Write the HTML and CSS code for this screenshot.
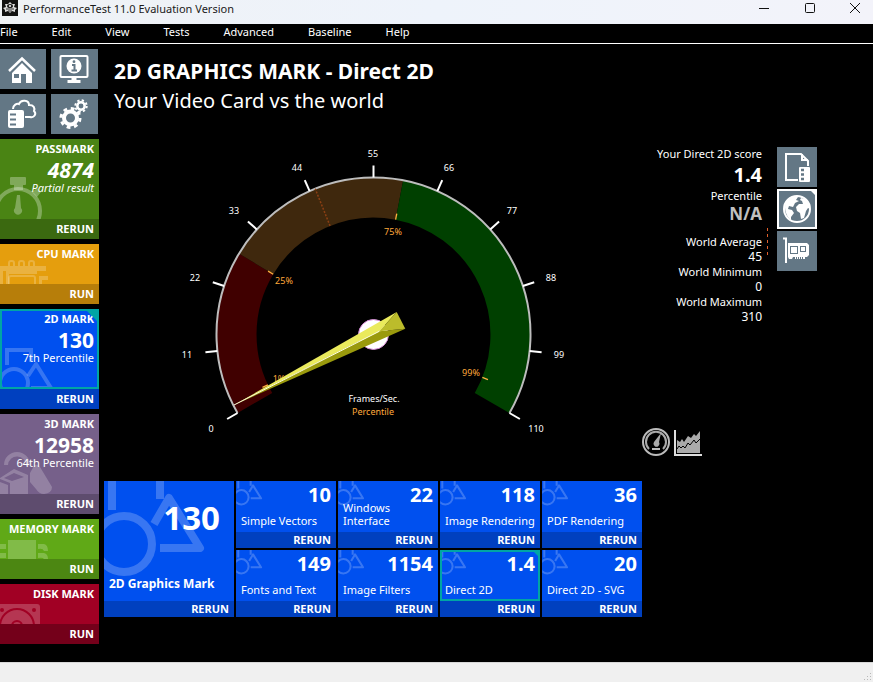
FILE: index.html
```html
<!DOCTYPE html>
<html lang="en">
<head>
<meta charset="utf-8">
<title>PerformanceTest 11.0 Evaluation Version</title>
<link rel="stylesheet" href="styles.css">
</head>
<body>
<svg class="defs" aria-hidden="true">
  <symbol id="shapes" viewBox="0 0 130 120">
    <g fill="none" stroke="currentColor" stroke-width="8" stroke-linejoin="round">
      <path d="M8 0V29M56 0V18"/>
      <circle cx="20" cy="63" r="28"/>
      <path d="M50 43L65 17L96 67H56"/>
    </g>
  </symbol>
</svg>

<header class="titlebar">
  <svg class="app-icon" viewBox="0 0 16 16" aria-hidden="true">
    <rect width="16" height="16" fill="#111"/>
    <path d="M1 8L4 7L3 4L6 4L8 2L10 4L13 4L12 7L15 8L13 10L13 12L10 11L8 13L6 11L3 12L3 10Z" fill="#ddd"/>
    <ellipse cx="8" cy="6" rx="3" ry="2" fill="#222"/><path d="M4 9H12M6 11H10" stroke="#333"/><circle cx="8" cy="6" r="1" fill="#fff"/>
  </svg>
  <span class="app-name">PerformanceTest 11.0 Evaluation Version</span>
  <div class="window-buttons">
    <button aria-label="Minimize"><svg viewBox="0 0 12 12"><path d="M1 6.500H11"/></svg></button>
    <button aria-label="Maximize"><svg viewBox="0 0 12 12"><rect x="1.500" y="1.500" width="9" height="9" rx="1"/></svg></button>
    <button aria-label="Close"><svg viewBox="0 0 12 12"><path d="M1 1L11 11M11 1L1 11"/></svg></button>
  </div>
</header>

<nav class="menubar">
  <a href="#file">File</a><a href="#edit">Edit</a><a href="#view">View</a><a href="#tests">Tests</a><a href="#advanced">Advanced</a><a href="#baseline">Baseline</a><a href="#help">Help</a>
</nav>

<div class="workspace">
  <aside class="sidebar">
    <div class="shortcuts">
      <button class="icon-button" aria-label="Home">
        <svg viewBox="0 0 46 40"><path d="M9 22L22 9.500L35 22" fill="none" stroke="#fff" stroke-width="2.500"/><path d="M12 24L22 14L32 24V34H26V25H21V34H12Z" fill="#fff"/><rect x="14" y="25" width="5" height="4" fill="#637785"/></svg>
      </button>
      <button class="icon-button" aria-label="System information">
        <svg viewBox="0 0 46 40"><rect x="9" y="7" width="27" height="21" rx="1" fill="none" stroke="#fff" stroke-width="2"/><circle cx="22.500" cy="17" r="7.500" fill="#fff"/><circle cx="22.500" cy="12.700" r="1.400" fill="#637785"/><path d="M20.500 16H23V21M20 21.500H25.500" stroke="#637785" stroke-width="2" fill="none"/><path d="M20 29H25V31H29V34H16V31H20Z" fill="#fff"/></svg>
      </button>
      <button class="icon-button" aria-label="Baselines">
        <svg viewBox="0 0 46 40"><path d="M13 15C13 11 17 9 19 10C21 5 29 6 29 11C34 11 35 14 34 17C37 20 34 24 30 23H25" fill="none" stroke="#fff" stroke-width="2"/><rect x="8" y="16" width="16" height="18" rx="2" fill="#fff"/><path d="M10 20.500H16M10 25.500H16M10 30.500H16" stroke="#637785" stroke-width="2"/></svg>
      </button>
      <button class="icon-button" aria-label="Preferences">
        <svg viewBox="0 0 46 40"><g fill="none" stroke="#fff"><circle cx="19" cy="24" r="6.500" stroke-width="4"/><circle cx="19" cy="24" r="9.500" stroke-width="3" stroke-dasharray="3.730 3.730"/><circle cx="29.500" cy="12" r="3.700" stroke-width="2.500"/><circle cx="29.500" cy="12" r="5.700" stroke-width="2" stroke-dasharray="2.240 2.240"/></g></svg>
      </button>
    </div>

    <section class="mark mark-tall passmark">
      <div class="mark-body">
        <svg class="mark-art" viewBox="0 0 60 50"><rect x="10" y="8" width="16" height="8" rx="1" fill="currentColor"/><path d="M14 16H23V21H14ZM32 23L37 19L41 23L37 28Z" fill="currentColor"/><circle cx="18" cy="42" r="22" fill="none" stroke="currentColor" stroke-width="4"/><path d="M17 26H20L21 39A4 4 0 1 1 15 39Z" fill="currentColor"/></svg>
        <h2>PASSMARK</h2><strong class="partial">4874</strong><em>Partial result</em>
      </div>
      <button class="run">RERUN</button>
    </section>
    <section class="mark cpu">
      <div class="mark-body">
        <svg class="mark-art" viewBox="0 0 60 50"><path d="M0 32H46V37H0ZM0 37H3V50H0ZM6 37H37V40H9V50H6ZM39 42H48V46H42V50H39Z" fill="currentColor"/><path d="M9 32V29Q9 27 11 27H12Q14 27 14 29V32M19 32V29Q19 27 21 27H22Q24 27 24 29V32M29 32V29Q29 27 31 27H32Q34 27 34 29V32" fill="none" stroke="currentColor" stroke-width="2"/><path d="M9 50V44Q9 42 11 42H33Q35 42 35 44V50" fill="none" stroke="currentColor" stroke-width="2"/></svg>
        <h2>CPU MARK</h2>
      </div>
      <button class="run">RUN</button>
    </section>
    <section class="mark mark-tall twod">
      <div class="mark-body selected">
        <svg class="mark-art" viewBox="0 0 60 50"><g fill="none" stroke="currentColor" stroke-width="4"><path d="M7 26V11H31V23"/><circle cx="14" cy="44" r="14"/><path d="M28 37L36 25L51 49H31" stroke-linejoin="round"/></g></svg>
        <h2>2D MARK</h2><strong>130</strong><span>7th Percentile</span>
      </div>
      <button class="run">RERUN</button>
    </section>
    <section class="mark mark-tall threed">
      <div class="mark-body">
        <svg class="mark-art" viewBox="0 0 60 50"><path d="M4 21A13 13 0 0 1 30 21L26 22A9 9 0 0 0 8 21Z" fill="currentColor"/><path d="M0 34L14 25L28 31V50H10V39L0 35ZM4 34L12 37L24 33L14 29Z" fill="currentColor" fill-rule="evenodd"/><path d="M0 38L8 41V50H0ZM34 22Q37 19 40 23L52 43Q52 49 44 50Q39 50 36 45L30 38V29Z" fill="currentColor"/></svg>
        <h2>3D MARK</h2><strong>12958</strong><span>64th Percentile</span>
      </div>
      <button class="run">RERUN</button>
    </section>
    <section class="mark memory">
      <div class="mark-body">
        <svg class="mark-art" viewBox="0 0 60 50"><path d="M8 31H36V50H8ZM0 35H6V40H0ZM0 44H6V49H0ZM38 35H44Q48 36 48 42H44Q43 39 38 40ZM38 44H44Q48 45 48 50H44Q43 48 38 49Z" fill="currentColor"/></svg>
        <h2>MEMORY MARK</h2>
      </div>
      <button class="run">RUN</button>
    </section>
    <section class="mark disk">
      <div class="mark-body">
        <svg class="mark-art" viewBox="0 0 60 50"><path d="M0 30H37Q40 30 40 33V50H0Z" fill="currentColor"/><g fill="none" stroke="#a10024" stroke-width="2"><circle cx="17" cy="52" r="17"/><circle cx="17" cy="52" r="5"/></g><circle cx="2" cy="36" r="2" fill="#a10024"/><circle cx="34" cy="36" r="2" fill="#a10024"/></svg>
        <h2>DISK MARK</h2>
      </div>
      <button class="run">RUN</button>
    </section>
  </aside>

  <main>
    <h1>2D GRAPHICS MARK - Direct 2D</h1>
    <p class="subtitle">Your Video Card vs the world</p>

    <div class="stage">
      <svg class="gauge" viewBox="104 127 538 333" role="img" aria-label="Direct 2D score gauge">
        <g transform="translate(373.500 334.500)" fill="none">
          <path d="M-118.600 68.500A137 137 0 0 1 -117.400 -70.600" stroke="#400000" stroke-width="40"/>
          <path d="M-117.400 -70.600A137 137 0 0 1 25.900 -134.500" stroke="#3f280d" stroke-width="40"/>
          <path d="M25.900 -134.500A137 137 0 0 1 118.600 68.500" stroke="#004000" stroke-width="40"/>
          <path d="M-136 78.500A157 157 0 1 1 136 78.500" stroke="#bdbdbd" stroke-width="2"/>
          <path d="M0 -117V-157" transform="rotate(-21.800)" stroke="#8b3f13" stroke-width="1.500" stroke-dasharray="2 1.500"/>
          <g stroke="#fff" stroke-width="2">
            <path d="M0 -157V-169" transform="rotate(-120)"/><path d="M0 -157V-169" transform="rotate(-96)"/><path d="M0 -157V-169" transform="rotate(-72)"/><path d="M0 -157V-169" transform="rotate(-48)"/><path d="M0 -157V-169" transform="rotate(-24)"/><path d="M0 -157V-169"/><path d="M0 -157V-169" transform="rotate(24)"/><path d="M0 -157V-169" transform="rotate(48)"/><path d="M0 -157V-169" transform="rotate(72)"/><path d="M0 -157V-169" transform="rotate(96)"/><path d="M0 -157V-169" transform="rotate(120)"/>
          </g>
          <g stroke="#ffb040" stroke-width="1.300">
            <path d="M0 -117V-123" transform="rotate(-115.500)"/><path d="M0 -117V-123" transform="rotate(-59)"/><path d="M0 -117V-123" transform="rotate(10.900)"/><path d="M0 -117V-123" transform="rotate(111.500)"/>
          </g>
        </g>
        <g class="gauge-scale">
          <text x="211" y="432">0</text><text x="187" y="358">11</text><text x="195" y="281">22</text><text x="234" y="214">33</text><text x="297" y="171">44</text><text x="373" y="157">55</text><text x="449" y="171">66</text><text x="512" y="214">77</text><text x="551" y="281">88</text><text x="559" y="358">99</text><text x="536" y="432">110</text>
          <text x="374" y="402">Frames/Sec.</text>
        </g>
        <g class="gauge-percent">
          <text x="279" y="382">1%</text><text x="284" y="284">25%</text><text x="393" y="235">75%</text><text x="471" y="376">99%</text><text x="373" y="415">Percentile</text>
        </g>
        <circle cx="373.500" cy="334.500" r="15" fill="#fff" stroke="#d58bd5"/>
        <path d="M234 405L396.700 312L379.300 331.300Z" fill="#eaea5c"/>
        <path d="M234 405L379.300 331.300L405.300 328.700Z" fill="#9a9a0d"/>
        <path d="M396.700 312L405.300 328.700L379.300 331.300Z" fill="#bcbc2b"/>
        <path d="M234 405L379.300 331.300" stroke="#ffffe0"/>
      </svg>

      <div class="results">
        <div class="score-row">
          <dl class="scores">
            <dt>Your Direct 2D score</dt><dd class="score">1.4</dd>
            <dt>Percentile</dt><dd class="score muted">N/A</dd>
            <div class="world">
              <dt>World Average</dt><dd>45</dd>
              <dt>World Minimum</dt><dd>0</dd>
              <dt>World Maximum</dt><dd>310</dd>
            </div>
          </dl>
          <div class="compare">
            <button class="icon-button" aria-label="Compare with baselines">
              <svg viewBox="0 0 40 40"><path d="M21 33H9V7H24L31 14V19" fill="none" stroke="#fff" stroke-width="2"/><path d="M25 7V13H31" fill="none" stroke="#fff" stroke-width="2"/><rect x="22" y="20" width="11" height="15" rx="1" fill="#fff"/><path d="M24 23H27M24 27.500H27M24 32H27" stroke="#637785" stroke-width="2.500"/></svg>
            </button>
            <button class="icon-button current" aria-label="Compare with the world">
              <svg viewBox="0 0 40 40"><circle cx="20" cy="20" r="13" fill="none" stroke="#fff" stroke-width="2"/><path d="M8 18C8 12 12 8 17 7L21 8L19 11L22 12L18 14L16 18L12 17L11 20L15 21L17 24L14 28V31C10 28 8 23 8 18ZM24 9L28 10C31 13 33 16 33 20L31 19L29 22L27 29L24 30L23 24L20 22L19 18L22 15L26 15L25 12L23 11Z" fill="#fff"/><path d="M34 2H38V6Z" fill="#fff"/></svg>
            </button>
            <button class="icon-button" aria-label="Compare with graphics cards">
              <svg viewBox="0 0 40 40"><path d="M6 7.500H9V32" fill="none" stroke="#fff" stroke-width="2"/><path d="M11 12H30L32 14V24L30 26H28V28H18V26H16L15 28H12L11 26Z" fill="#fff"/><g fill="none" stroke="#637785"><rect x="13.500" y="15.500" width="7" height="7"/><rect x="23.500" y="15.500" width="5" height="5"/><path d="M19.500 26V28M21.500 26V28M23.500 26V28M25.500 26V28"/></g></svg>
            </button>
          </div>
        </div>
        <div class="chart-kinds">
          <button aria-label="Gauge"><svg viewBox="0 0 28 28"><circle cx="14" cy="14" r="13" fill="none" stroke="#bbb" stroke-width="2"/><path d="M7 21A10 10 0 1 1 21 21" fill="none" stroke="#aaa" stroke-width="2"/><path d="M19 5L17 14A3 3 0 1 1 12 14Z" fill="#aaa"/><path d="M10 21H18" stroke="#bbb" stroke-width="2"/></svg></button>
          <button aria-label="Distribution"><svg viewBox="0 0 28 28"><path d="M1 2V27H28" fill="none" stroke="#ddd" stroke-width="2"/><path d="M3 12L6 14L8 11L10 14L14 8L17 10L20 6L22 8L26 3V25H3Z" fill="#aaa"/><path d="M3 21L5 18L7 20L9 18L11 20L14 15L16 17L20 12L22 15L26 11" fill="none" stroke="#000"/></svg></button>
        </div>
      </div>
    </div>

    <div class="tests">
      <section class="overall">
        <div class="test-body"><svg class="art" viewBox="0 0 130 120"><use href="#shapes"/></svg><strong>130</strong><h2>2D Graphics Mark</h2></div>
        <button class="run">RERUN</button>
      </section>
      <section class="test"><div class="test-body"><svg class="art" viewBox="0 0 130 120"><use href="#shapes"/></svg><strong>10</strong><h3>Simple Vectors</h3></div><button class="run">RERUN</button></section>
      <section class="test"><div class="test-body"><svg class="art" viewBox="0 0 130 120"><use href="#shapes"/></svg><strong>22</strong><h3>Windows<br>Interface</h3></div><button class="run">RERUN</button></section>
      <section class="test"><div class="test-body"><svg class="art" viewBox="0 0 130 120"><use href="#shapes"/></svg><strong>118</strong><h3>Image Rendering</h3></div><button class="run">RERUN</button></section>
      <section class="test"><div class="test-body"><svg class="art" viewBox="0 0 130 120"><use href="#shapes"/></svg><strong>36</strong><h3>PDF Rendering</h3></div><button class="run">RERUN</button></section>
      <section class="test"><div class="test-body"><svg class="art" viewBox="0 0 130 120"><use href="#shapes"/></svg><strong>149</strong><h3>Fonts and Text</h3></div><button class="run">RERUN</button></section>
      <section class="test"><div class="test-body"><svg class="art" viewBox="0 0 130 120"><use href="#shapes"/></svg><strong>1154</strong><h3>Image Filters</h3></div><button class="run">RERUN</button></section>
      <section class="test"><div class="test-body selected"><svg class="art" viewBox="0 0 130 120"><use href="#shapes"/></svg><strong>1.4</strong><h3>Direct 2D</h3></div><button class="run">RERUN</button></section>
      <section class="test"><div class="test-body"><svg class="art" viewBox="0 0 130 120"><use href="#shapes"/></svg><strong>20</strong><h3>Direct 2D - SVG</h3></div><button class="run">RERUN</button></section>
    </div>
  </main>
</div>

<footer class="statusbar"><svg viewBox="0 0 12 12" aria-hidden="true"><path d="M9 3h1v1h-1zM9 6h1v1h-1zM9 9h1v1h-1zM6 6h1v1h-1zM6 9h1v1h-1zM3 9h1v1h-1z"/></svg></footer>
</body>
</html>
```
FILE: styles.css
```css
* {
  box-sizing: border-box;
  margin: 0;
  padding: 0;
}

body {
  display: flex;
  flex-direction: column;
  min-height: 100vh;
  background: #000;
  color: #fff;
  font: 11px/14px "Noto Sans", "Open Sans", sans-serif;
}

button {
  border: 0;
  background: none;
  color: inherit;
  font: inherit;
  cursor: pointer;
}

svg {
  display: block;
}

.defs {
  position: absolute;
  width: 0;
  height: 0;
}

/* Window chrome */
.titlebar {
  display: flex;
  align-items: flex-start;
  height: 24px;
  padding-left: 2px;
  background: linear-gradient(90deg, #eff2f5, #eef3fb 50%, #f3f3fa);
  color: #1a1a1a;
}

.app-icon {
  width: 16px;
  height: 16px;
  margin-right: 5px;
}

.app-name {
  line-height: 18px;
}

.window-buttons {
  display: flex;
  margin-left: auto;
}

.window-buttons button {
  display: grid;
  place-items: center;
  width: 46px;
  height: 16px;
}

.window-buttons button:last-child {
  width: 36px;
  margin-left: 4px;
}

.window-buttons svg {
  width: 12px;
  height: 12px;
  fill: none;
  stroke: #111;
}

.menubar {
  display: flex;
  gap: 34px;
  height: 20px;
  border-bottom: 1px solid #fff;
  line-height: 16px;
}

.menubar a {
  color: #fff;
  text-decoration: none;
}

.workspace {
  display: flex;
  flex: 1;
  gap: 5px;
  padding: 5px 0 18px;
}

/* Sidebar */
.sidebar {
  display: flex;
  flex: none;
  flex-direction: column;
  gap: 5px;
  width: 99px;
}

.shortcuts {
  display: grid;
  grid-template-columns: 46px 47px;
  gap: 5px;
}

.icon-button {
  height: 40px;
  background: #637785;
}

.icon-button svg {
  width: 100%;
  height: 100%;
}

.mark {
  color: #fff;
  text-align: right;
}

.mark-body {
  position: relative;
  height: 40px;
  padding: 3px 5px 0;
  overflow: hidden;
}

.mark-tall .mark-body {
  height: 80px;
}

.mark h2 {
  position: relative;
  font-size: 11px;
  line-height: 14px;
}

.mark strong {
  display: block;
  position: relative;
  height: 25px;
  font-size: 21px;
  line-height: 28px;
}

.mark .partial {
  font-style: italic;
}

.mark span,
.mark em {
  display: block;
  position: relative;
  line-height: 14px;
}

.mark-art {
  position: absolute;
  left: 0;
  bottom: 0;
  width: 60px;
  height: 50px;
  color: rgb(255 255 255 / 30%);
}

.run {
  display: block;
  width: 100%;
  height: 20px;
  padding-right: 5px;
  background: rgb(0 0 0 / 20%);
  font-size: 11px;
  font-weight: bold;
  line-height: 18px;
  text-align: right;
}

.passmark { background: #4a8414; }
.cpu { background: #e59e0d; }
.twod { background: #0050ef; }
.threed { background: #76608a; }
.memory { background: #60a917; }
.disk { background: #a10024; }
.disk .run { background: #74001a; }

.threed .mark-art,
.memory .mark-art,
.disk .mark-art,
.cpu .mark-art,
.twod .mark-art {
  color: rgb(255 255 255 / 21%);
}

.selected::before {
  content: "";
  position: absolute;
  inset: 0;
  z-index: 1;
  border: 2px solid #00a5a5;
}

.selected::after {
  content: "";
  position: absolute;
  top: 0;
  right: 0;
  border-top: 14px solid #00a5a5;
  border-left: 14px solid transparent;
}

.test .selected::after {
  border-width: 8px;
  border-right: 0;
  border-bottom: 0;
}

/* Main panel */
main {
  flex: 1;
  min-width: 0;
  padding-top: 7px;
}

h1,
.subtitle {
  padding-left: 10px;
  font-size: 20px;
  line-height: 30px;
}

h1 {
  font-size: 21px;
}

.stage {
  display: flex;
  margin-top: 11px;
  padding-bottom: 21px;
}

.gauge {
  flex: none;
  width: 538px;
  height: 333px;
}

.gauge text {
  font-size: 9px;
  text-anchor: middle;
}

.gauge-scale {
  fill: #fff;
}

.gauge-percent {
  fill: #ffa93b;
}

.results {
  display: flex;
  flex-direction: column;
  justify-content: space-between;
  padding: 20px 0 4px;
}

.score-row {
  display: flex;
  gap: 15px;
}

.scores {
  width: 120px;
  text-align: right;
}

.scores dt {
  line-height: 14px;
}

.scores dd {
  font-size: 12px;
  line-height: 16px;
}

.scores .score {
  font-size: 20px;
  font-weight: bold;
  line-height: 28px;
}

.scores .muted {
  padding-bottom: 3px;
  color: #c0c0c0;
  font-size: 17px;
  line-height: 22px;
}

.world {
  position: relative;
  padding-top: 7px;
}

.world::after {
  content: "";
  position: absolute;
  top: 0;
  right: -6px;
  width: 1px;
  height: 27px;
  background: repeating-linear-gradient(#e0602c 0 3px, transparent 3px 6px);
}

.compare {
  display: flex;
  flex-direction: column;
  gap: 2px;
}

.compare .icon-button {
  width: 40px;
}

.compare .current {
  outline: 2px solid #fff;
  outline-offset: -2px;
}

.chart-kinds {
  display: flex;
  gap: 4px;
}

.chart-kinds svg {
  width: 28px;
  height: 28px;
}

/* Test tiles */
.tests {
  display: grid;
  grid-template-columns: 130px repeat(4, 100px);
  grid-template-rows: 67px 67px;
  gap: 2px;
}

.test,
.overall {
  display: flex;
  flex-direction: column;
  background: #0050ef;
}

.overall {
  grid-row: span 2;
}

.tests .run {
  height: 16px;
  line-height: 14px;
}

.test-body {
  display: flex;
  position: relative;
  flex: 1;
  flex-direction: column;
  justify-content: space-between;
  padding: 0 5px 5px;
}

.test-body strong {
  position: relative;
  height: 20px;
  font-size: 20px;
  line-height: 28px;
  text-align: right;
}

.test-body h3 {
  position: relative;
  font-size: 11px;
  font-weight: normal;
  line-height: 13px;
  white-space: nowrap;
}

.art {
  position: absolute;
  top: 0;
  left: 0;
  width: 34px;
  height: 31px;
  color: rgb(255 255 255 / 22%);
}

.overall .art {
  width: 130px;
  height: 120px;
}

.overall .test-body {
  padding-bottom: 9px;
}

.overall strong {
  height: auto;
  padding: 12px 9px 0 0;
  font-size: 33px;
  line-height: 50px;
}

.overall h2 {
  position: relative;
  font-size: 12px;
  line-height: 16px;
}

.statusbar {
  display: flex;
  align-items: flex-end;
  justify-content: flex-end;
  height: 20px;
  border-top: 1px solid #d8d8d8;
  background: #f0f0f0;
}

.statusbar svg {
  width: 12px;
  height: 12px;
  fill: #b8b8b8;
}
```
